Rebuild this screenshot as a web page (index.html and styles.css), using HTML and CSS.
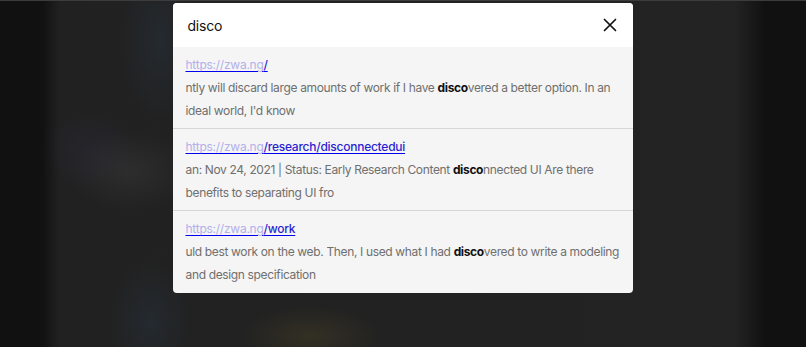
FILE: index.html
```html
<!DOCTYPE html>
<html>
<head>
<meta charset="utf-8">
<link rel="stylesheet" href="styles.css">
</head>
<body>
<div class="backdrop">
  <div class="modal">
    <div class="search">
      <span class="query">disco</span>
      <button class="close" aria-label="Close">
        <svg width="14" height="14" viewBox="0 0 14 14"><path d="M1.5 1.5L12.5 12.5M12.5 1.5L1.5 12.5" stroke="#111" stroke-width="1.7" stroke-linecap="round"/></svg>
      </button>
    </div>
    <ul class="results">
      <li class="result">
        <a class="url" href="#"><span class="host">https://zwa.ng</span><span class="path">/</span></a>
        <p class="snippet">ntly will discard large amounts of work if I have <b>disco</b>vered a better option. In an ideal world, I'd know</p>
      </li>
      <li class="result">
        <a class="url" href="#"><span class="host">https://zwa.ng</span><span class="path">/research/disconnectedui</span></a>
        <p class="snippet">an: Nov 24, 2021 | Status: Early Research Content <b>disco</b>nnected UI Are there benefits to separating UI fro</p>
      </li>
      <li class="result">
        <a class="url" href="#"><span class="host">https://zwa.ng</span><span class="path">/work</span></a>
        <p class="snippet">uld best work on the web. Then, I used what I had <b>disco</b>vered to write a modeling and design specification</p>
      </li>
    </ul>
  </div>
</div>
</body>
</html>
```
FILE: styles.css
```css
* { box-sizing: border-box; }
html, body { margin: 0; padding: 0; }
body {
  width: 806px;
  height: 347px;
  overflow: hidden;
  font-family: Inter, "Noto Sans", sans-serif;
}
.backdrop {
  width: 806px;
  height: 347px;
  padding-top: 2px;
  border-top: 1px solid #3c3c3c;
  background:
    radial-gradient(ellipse 70px 30px at 310px 335px, rgba(90,80,40,0.3), transparent),
    radial-gradient(ellipse 60px 40px at 130px 170px, rgba(60,60,60,0.45), transparent),
    radial-gradient(ellipse 50px 40px at 90px 150px, rgba(50,45,70,0.3), transparent),
    radial-gradient(ellipse 40px 80px at 160px 40px, rgba(40,55,70,0.4), transparent),
    radial-gradient(ellipse 40px 60px at 150px 320px, rgba(40,55,70,0.4), transparent),
    linear-gradient(to right, #111 0px, #111 42px, #212121 60px, #232323 735px, #111 765px, #111 806px);
  display: flex;
  justify-content: center;
}
.modal {
  width: 460px;
  height: 290px;
  margin-left: -1px;
  background: #f5f5f5;
  border-radius: 4px;
  overflow: hidden;
  display: flex;
  flex-direction: column;
}
.search {
  height: 44px;
  background: #fff;
  display: flex;
  align-items: center;
  justify-content: space-between;
  padding: 0 16px 0 15px;
}
.query {
  font-size: 14px;
  letter-spacing: -0.2px;
  color: #111;
}
.close {
  border: 0;
  background: transparent;
  padding: 0;
  width: 14px;
  height: 14px;
  display: flex;
}
.results {
  list-style: none;
  margin: 0;
  padding: 0;
}
.result {
  padding: 6px 9px 6px 13px;
  border-bottom: 1px solid #d6d6d6;
}
.result:last-child { border-bottom: 0; }
.url {
  display: block;
  font-size: 12px;
  letter-spacing: -0.25px;
  line-height: 23px;
  text-decoration: underline;
  text-decoration-thickness: 1px;
  text-underline-offset: 2px;
}
.host { color: #b3b0ea; text-decoration-color: #b3b0ea; }
.path { color: #2c1fd2; font-weight: 500; }
.snippet {
  margin: 0;
  font-size: 12px;
  letter-spacing: -0.35px;
  line-height: 23px;
  color: #6f6f6f;
}
.snippet b { color: #111; font-weight: 700; }
```
